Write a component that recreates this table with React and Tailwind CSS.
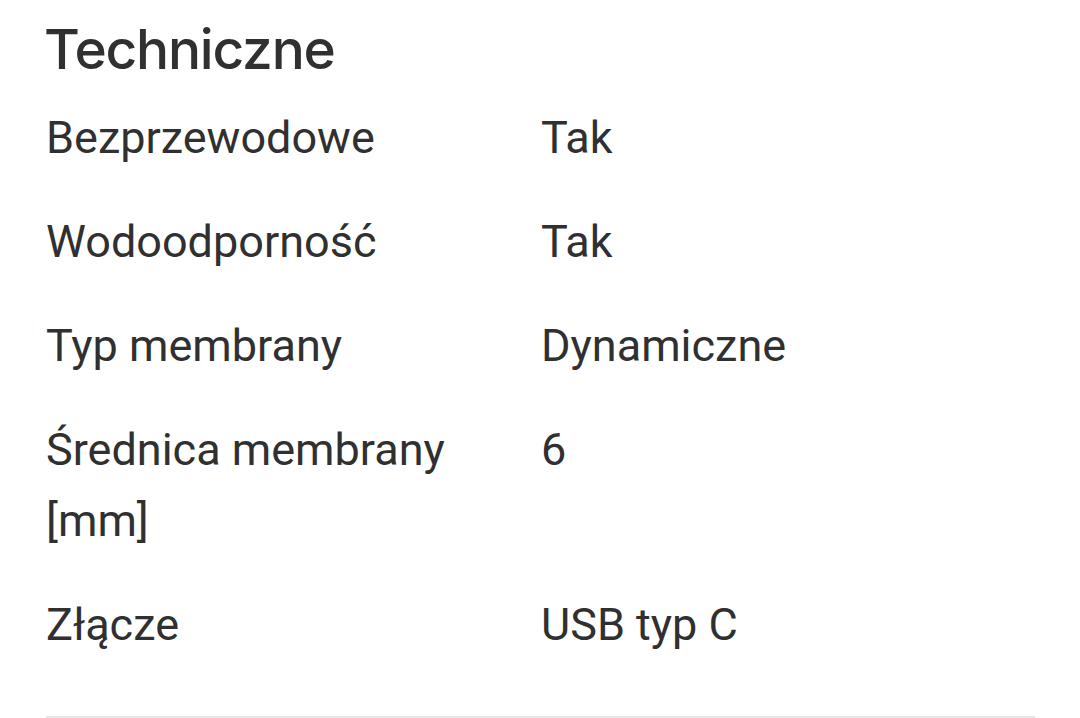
export default function App() {
  const rows = [
    ["Bezprzewodowe", "Tak"],
    ["Wodoodporność", "Tak"],
    ["Typ membrany", "Dynamiczne"],
    ["Średnica membrany [mm]", "6"],
    ["Złącze", "USB typ C"],
  ];
  return (
    <div className="w-[1080px] h-[718px] bg-white overflow-hidden pl-[46px] pr-[45px] text-[#303030]">
      <h2
        className="text-[55px] leading-[60px] font-medium pt-[19px] tracking-[-1.2px] -ml-[2px]"
        style={{ fontFamily: "Inter, 'Open Sans', sans-serif" }}
      >
        Techniczne
      </h2>
      <div
        className="flex flex-col pt-[7px]"
        style={{ fontFamily: "Roboto, 'Noto Sans', sans-serif" }}
      >
        {rows.map(([k, v]) => (
          <div key={k} className="grid grid-cols-[495px_1fr] pt-[16px] pb-[17px] text-[45px] leading-[71px]">
            <div className="pr-[40px]">{k}</div>
            <div>{v}</div>
          </div>
        ))}
      </div>
      <div className="mt-[39px] h-[2px] bg-[#e6e6e6]" />
    </div>
  );
}
